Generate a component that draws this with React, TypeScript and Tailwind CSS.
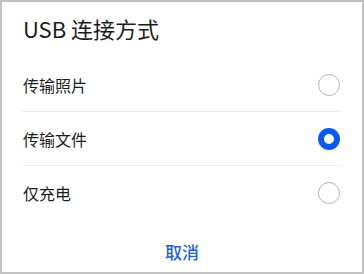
import React from "react";

const font = { fontFamily: '"Noto Sans CJK SC", "Noto Sans", sans-serif' };

function Radio({ checked }: { checked: boolean }) {
  return checked ? (
    <div className="w-[22px] h-[22px] rounded-full border-[6px] border-[#0a59f7] bg-white mr-[2px]" />
  ) : (
    <div className="w-[22px] h-[22px] rounded-full border border-[#b5b5b5] bg-white mr-[2px]" />
  );
}

export default function App() {
  const items = [
    { label: "传输照片", checked: false },
    { label: "传输文件", checked: true },
    { label: "仅充电", checked: false },
  ];
  return (
    <div
      className="w-[364px] h-[274px] border-2 border-[#c2c2c2] bg-white px-[20px] flex flex-col"
      style={font}
    >
      <div className="pt-[12px] text-[22px] leading-[28px] text-[#1c1c1c] pl-[1px]">USB 连接方式</div>
      <div className="mt-[16px] flex flex-col">
        {items.map((it, i) => (
          <div
            key={it.label}
            className={
              i < items.length - 1
                ? "h-[54px] flex items-center justify-between border-b border-[#ebebeb]"
                : "h-[54px] flex items-center justify-between"
            }
          >
            <span className="text-[16px] leading-[22px] text-[#1c1c1c] pl-[1px]">{it.label}</span>
            <Radio checked={it.checked} />
          </div>
        ))}
      </div>
      <div className="mt-[20px] h-[24px] leading-[24px] text-center text-[17px] font-medium text-[#1f5fd6]">
        取消
      </div>
    </div>
  );
}
